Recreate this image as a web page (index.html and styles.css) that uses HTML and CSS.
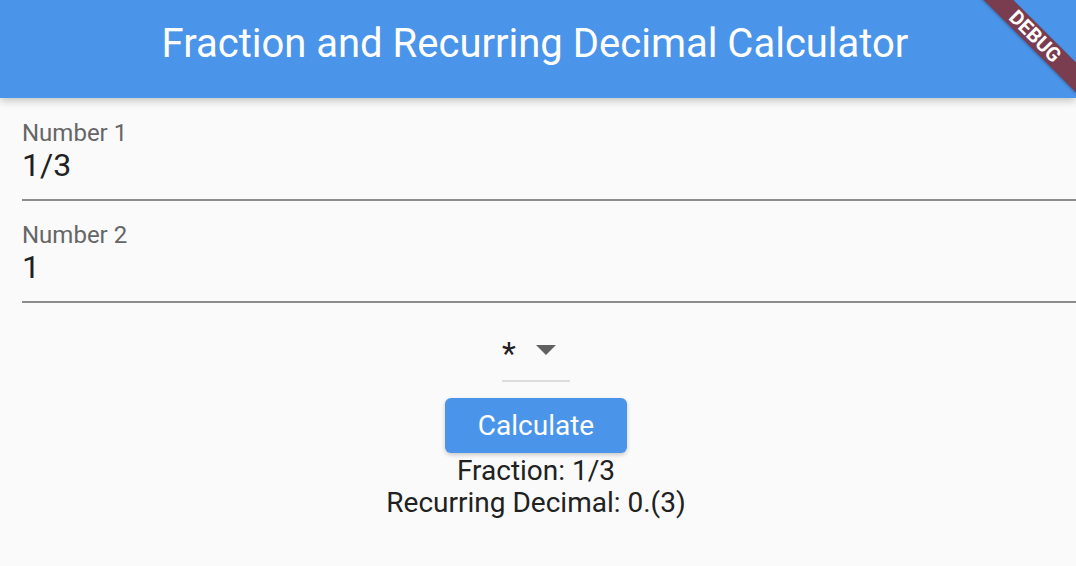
FILE: index.html
```html
<!DOCTYPE html>
<html>
<head>
<meta charset="utf-8">
<link rel="stylesheet" href="styles.css">
</head>
<body>
<header class="appbar">
  <h1 class="title">Fraction and Recurring Decimal Calculator</h1>
</header>
<div class="banner">DEBUG</div>
<main class="content">
  <div class="field">
    <div class="label">Number 1</div>
    <div class="value">1/3</div>
  </div>
  <div class="field">
    <div class="label">Number 2</div>
    <div class="value">1</div>
  </div>
  <div class="center">
    <div class="dropdown">
      <span class="op">*</span>
      <svg class="arrow" width="20" height="10" viewBox="0 0 20 10"><path d="M0 0 L20 0 L10 10 Z" fill="#616161"/></svg>
    </div>
    <button class="btn">Calculate</button>
    <div class="result">Fraction: 1/3</div>
    <div class="result">Recurring Decimal: 0.(3)</div>
  </div>
</main>
</body>
</html>
```
FILE: styles.css
```css
html, body {
  margin: 0;
  padding: 0;
  background: #fafafa;
  font-family: Roboto, "Liberation Sans", sans-serif;
  overflow: hidden;
  width: 1076px;
  height: 566px;
}
.appbar {
  height: 98px;
  background: #4a95ea;
  display: flex;
  align-items: center;
  justify-content: center;
  box-shadow: 0 3px 8px rgba(0,0,0,0.22);
  position: relative;
  z-index: 1;
}
.title {
  margin: 0 0 12px 0;
  color: #fff;
  font-weight: 400;
  font-size: 40px;
  padding-right: 6px;
}
.banner {
  position: absolute;
  z-index: 2;
  width: 140px;
  height: 21px;
  line-height: 21px;
  left: 965px;
  top: 26px;
  transform: rotate(45deg);
  background: #7a3c4f;
  color: #fff;
  font-weight: 700;
  font-size: 20px;
  text-align: center;
  box-shadow: 0 1px 3px rgba(0,0,0,0.3);
}
.content {
  padding-top: 1px;
}
.field {
  margin-left: 22px;
  padding-top: 22px;
  padding-bottom: 18px;
  border-bottom: 2px solid #8c8c8c;
}
.label {
  font-size: 24px;
  line-height: 24px;
  color: #666;
}
.value {
  margin-top: 4px;
  font-size: 32px;
  line-height: 32px;
  color: #212121;
}
.center {
  display: flex;
  flex-direction: column;
  align-items: center;
  padding-right: 4px;
}
.dropdown {
  margin-top: 19px;
  width: 68px;
  height: 58px;
  border-bottom: 2px solid #dcdcdc;
  display: flex;
  align-items: center;
  justify-content: space-between;
}
.op {
  font-size: 32px;
  color: #212121;
  margin-left: 0;
  margin-top: 4px;
}
.arrow {
  margin-right: 14px;
  margin-top: -2px;
}
.btn {
  margin-top: 16px;
  width: 182px;
  height: 55px;
  border: none;
  border-radius: 6px;
  background: #4a95ea;
  color: #fff;
  font-family: Roboto, "Liberation Sans", sans-serif;
  font-size: 28px;
  box-shadow: 0 2px 4px rgba(0,0,0,0.2);
  padding: 0;
}
.result {
  font-size: 28px;
  line-height: 32px;
  color: #212121;
}
.btn + .result {
  margin-top: 2px;
}
```
